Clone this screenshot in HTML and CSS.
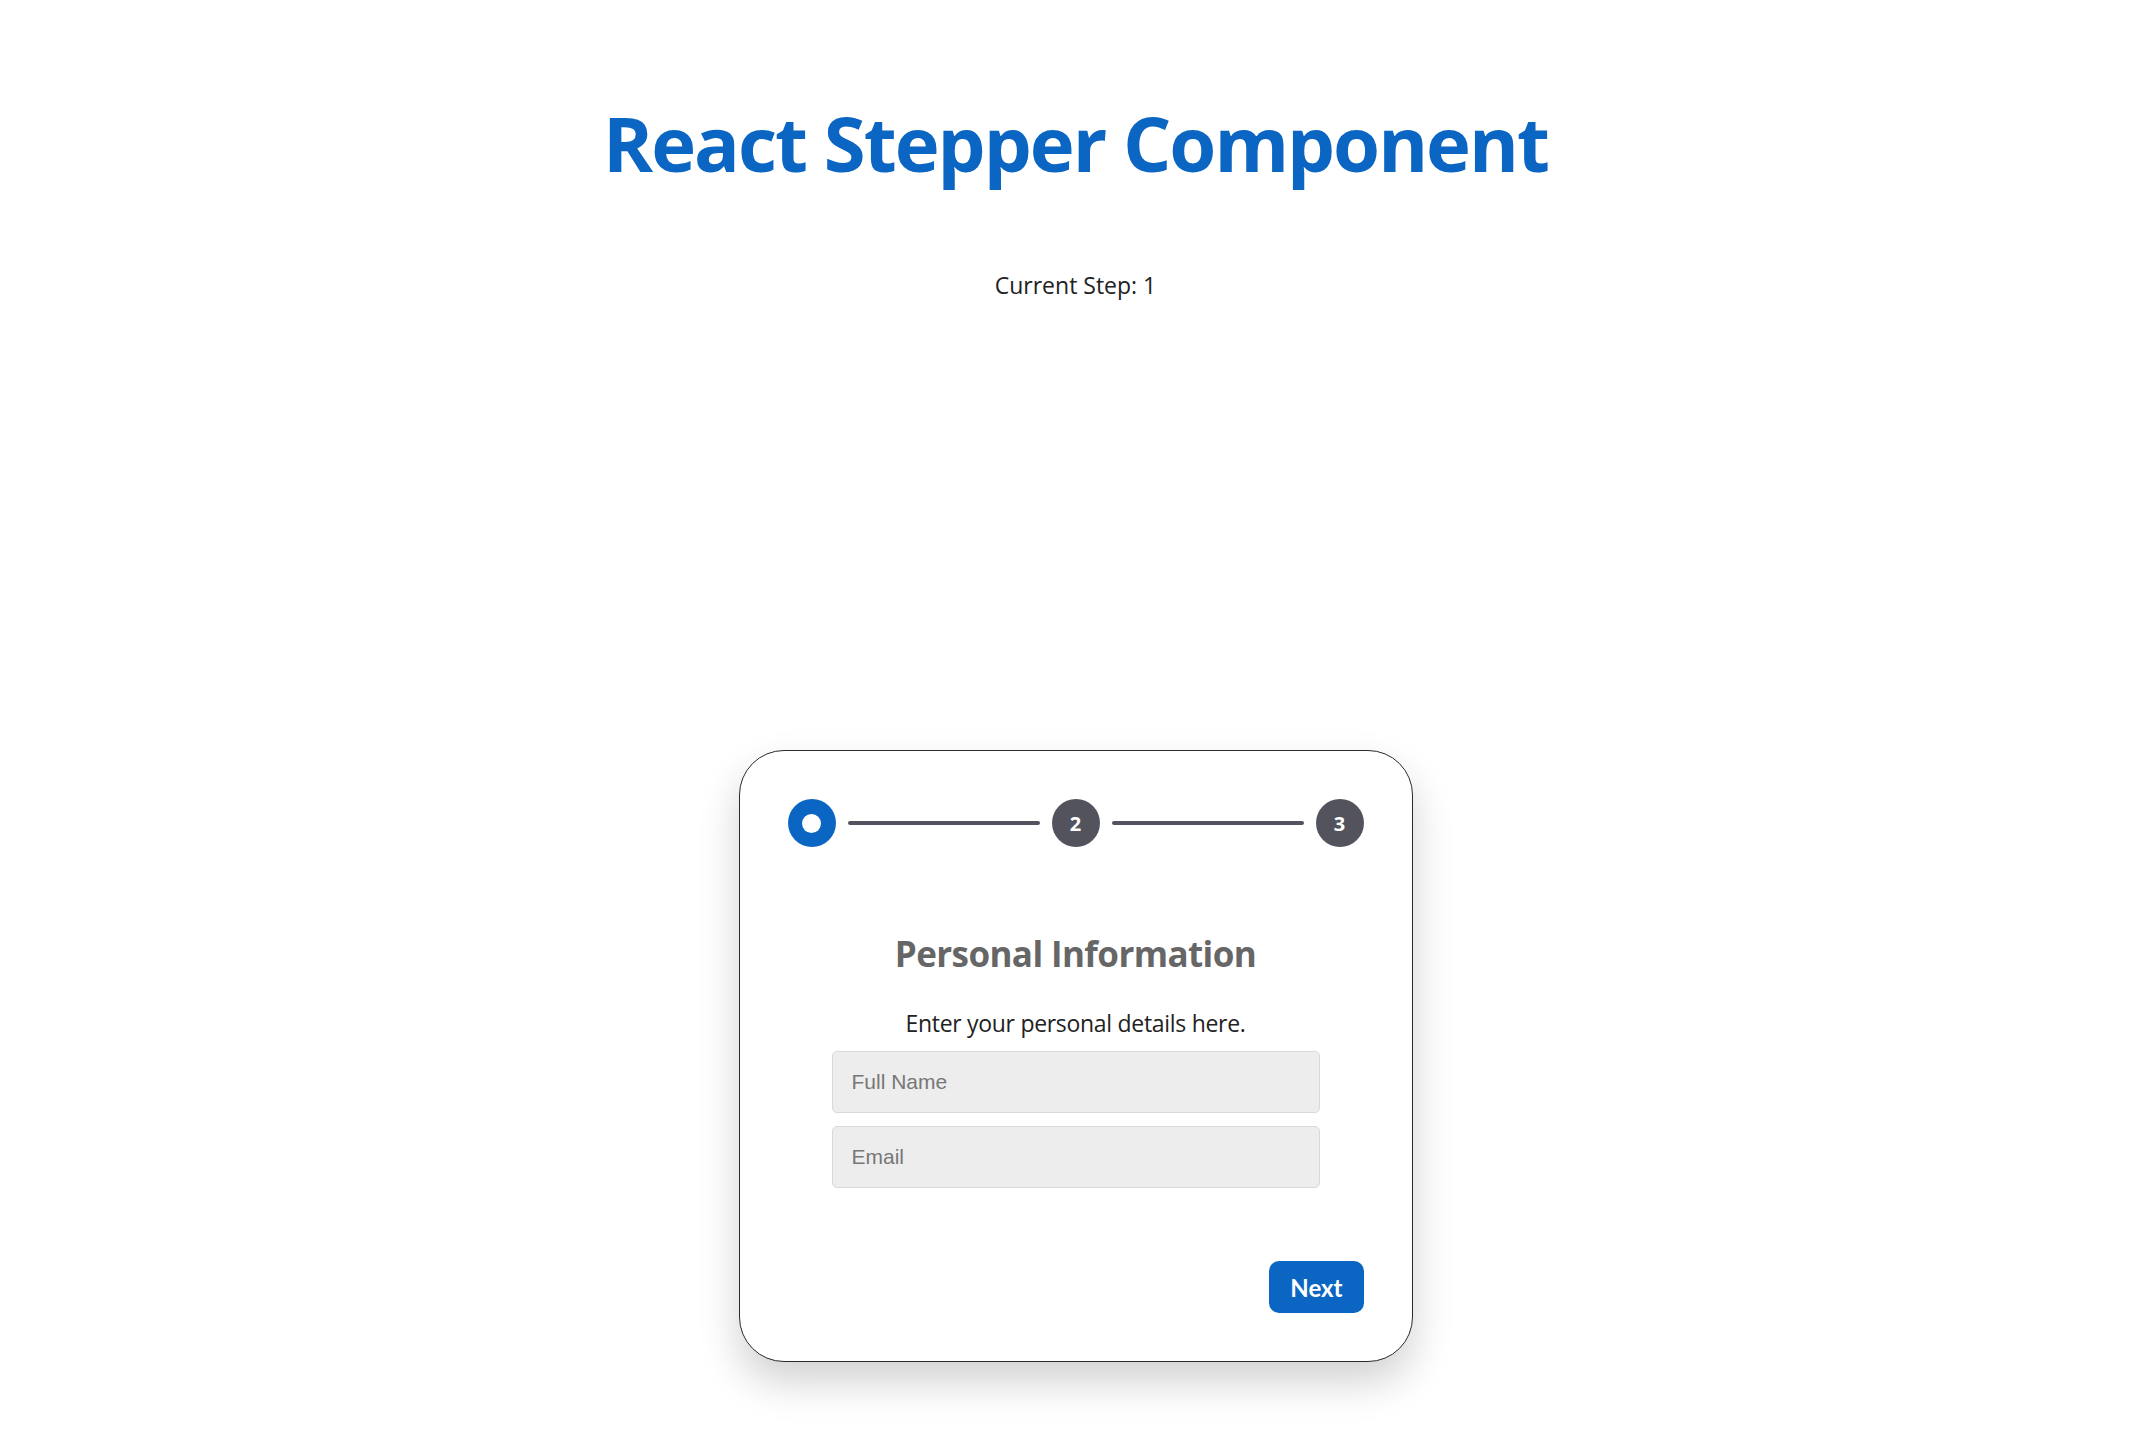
FILE: index.html
```html
<!DOCTYPE html>
<html lang="en">
<head>
<meta charset="utf-8">
<title>React Stepper Component</title>
<link rel="stylesheet" href="styles.css">
</head>
<body>
  <div class="app">
    <h1 class="title">React Stepper Component</h1>
    <p class="current">Current Step: 1</p>
    <div class="card">
      <div class="stepper">
        <div class="step step-active"><span class="dot"></span></div>
        <div class="line"></div>
        <div class="step">2</div>
        <div class="line"></div>
        <div class="step">3</div>
      </div>
      <div class="content">
        <h2 class="heading">Personal Information</h2>
        <p class="desc">Enter your personal details here.</p>
        <input class="field" type="text" placeholder="Full Name">
        <input class="field" type="email" placeholder="Email">
      </div>
      <div class="actions">
        <button class="btn" type="button">Next</button>
      </div>
    </div>
  </div>
</body>
</html>
```

FILE: styles.css
```css
html, body {
  margin: 0;
  padding: 0;
  background: #ffffff;
}

body {
  font-family: "Open Sans", "Noto Sans", sans-serif;
  color: #222222;
}

.app {
  display: flex;
  flex-direction: column;
  align-items: center;
  padding-top: 97px;
  padding-left: 3px;
  padding-bottom: 80px;
}

.title {
  margin: 0;
  font-size: 76px;
  line-height: 91px;
  font-weight: 700;
  color: #0b66c3;
  letter-spacing: -2px;
}

.current {
  margin: 81px 0 0;
  font-size: 23px;
  line-height: 32px;
  color: #222222;
}

.card {
  box-sizing: border-box;
  width: 674px;
  margin-top: 449px;
  padding: 48px;
  border: 1px solid #2b2b2b;
  border-radius: 45px;
  background: #ffffff;
  box-shadow: 0 20px 40px rgba(0, 0, 0, 0.18);
}

.stepper {
  display: flex;
  align-items: center;
}

.step {
  flex: none;
  width: 48px;
  height: 48px;
  border-radius: 50%;
  background: #53535d;
  color: #ffffff;
  font-weight: 700;
  font-size: 20px;
  display: flex;
  align-items: center;
  justify-content: center;
}

.step-active {
  background: #0b66c3;
}

.dot {
  width: 19px;
  height: 19px;
  border-radius: 50%;
  background: #ffffff;
}

.line {
  flex: 1;
  height: 4px;
  margin: 0 12px;
  border-radius: 2px;
  background: #53535d;
}

.content {
  display: flex;
  flex-direction: column;
  align-items: center;
  margin-top: 83px;
}

.heading {
  margin: 0;
  font-size: 35px;
  line-height: 48px;
  font-weight: 700;
  color: #666666;
  letter-spacing: -0.6px;
}

.desc {
  margin: 29px 0 6px;
  font-size: 23px;
  line-height: 32px;
  color: #222222;
  letter-spacing: -0.3px;
}

.field {
  box-sizing: border-box;
  width: 488px;
  height: 62px;
  margin-top: 6px;
  margin-bottom: 7px;
  padding: 0 19px;
  border: 1px solid #d9d9d9;
  border-radius: 5px;
  background: #ededed;
  font-family: "Liberation Sans", Arial, sans-serif;
  font-size: 21px;
  color: #333333;
  outline: none;
}

.field::placeholder {
  color: #777777;
}

.actions {
  display: flex;
  justify-content: flex-end;
  margin-top: 66px;
}

.btn {
  height: 52px;
  padding: 0 21px;
  border: none;
  border-radius: 10px;
  background: #0b66c3;
  color: #ffffff;
  font-family: "Lato", "Open Sans", sans-serif;
  font-weight: 700;
  font-size: 24px;
  cursor: pointer;
}
```
